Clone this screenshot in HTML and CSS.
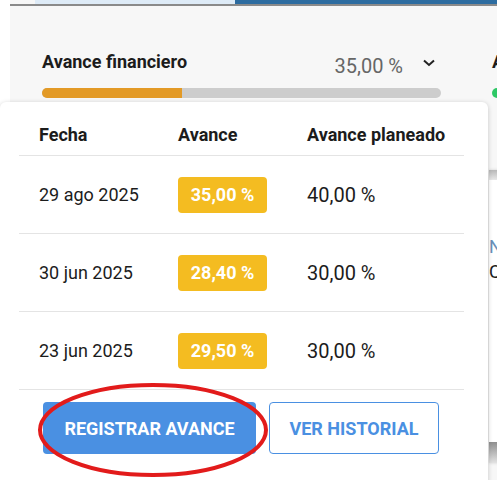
FILE: index.html
```html
<!DOCTYPE html>
<html lang="es">
<head>
    <meta charset="UTF-8">
    <meta name="viewport" content="width=device-width, initial-scale=1.0">
    <title>Avance</title>
    <link rel="stylesheet" href="styles.css">
</head>
<body>

<div class="app">
    <div class="topbar">
        <div class="tab tab-gris"></div>
        <div class="tab tab-claro"></div>
        <div class="tab tab-oscuro"></div>
    </div>

    <div class="panel">
        <div class="metric">
            <div class="metric-head">
                <span class="metric-title">Avance financiero</span>
                <span class="metric-value">35,00 %</span>
                <svg class="chevron" width="12" height="8" viewBox="0 0 12 8"><path d="M1 1.5 L6 6 L11 1.5" fill="none" stroke="#222" stroke-width="2"/></svg>
            </div>
            <div class="bar"><div class="bar-fill" style="width: 35%"></div></div>
        </div>

        <div class="metric metric-next">
            <div class="metric-head">
                <span class="metric-title">Avance físico</span>
            </div>
            <div class="bar bar-green"></div>
            <div class="side-card">
                <div class="side-top"></div>
                <div class="side-text side-blue">N</div>
                <div class="side-text">C</div>
                <div class="side-bottom"></div>
            </div>
        </div>
    </div>

    <div class="popup">
        <div class="tabla">
            <div class="fila cabecera">
                <div class="celda">Fecha</div>
                <div class="celda">Avance</div>
                <div class="celda">Avance planeado</div>
            </div>
            <div class="fila">
                <div class="celda">29 ago 2025</div>
                <div class="celda"><span class="badge">35,00 %</span></div>
                <div class="celda planeado">40,00 %</div>
            </div>
            <div class="fila">
                <div class="celda">30 jun 2025</div>
                <div class="celda"><span class="badge">28,40 %</span></div>
                <div class="celda planeado">30,00 %</div>
            </div>
            <div class="fila">
                <div class="celda">23 jun 2025</div>
                <div class="celda"><span class="badge">29,50 %</span></div>
                <div class="celda planeado">30,00 %</div>
            </div>
        </div>
        <div class="acciones">
            <button class="btn btn-primario">REGISTRAR AVANCE</button>
            <button class="btn btn-secundario">VER HISTORIAL</button>
        </div>
    </div>

    <svg class="marca" width="234" height="100" viewBox="0 0 234 100">
        <ellipse cx="116" cy="47" rx="113" ry="45" fill="none" stroke="#e21b1b" stroke-width="4"/>
    </svg>
</div>

</body>
</html>
```

FILE: styles.css
```css
body {
    margin: 0;
    padding: 0;
    font-family: Roboto, "Liberation Sans", Arial, sans-serif;
    background-color: #fff;
    color: #1c1c1c;
    overflow: hidden;
}
.app {
    position: relative;
    height: 480px;
    padding-left: 10px;
}
.topbar {
    display: flex;
    height: 4px;
    border-bottom: 2px solid #8a8a8a;
}
.tab-gris {
    width: 25px;
    background-color: #f7f7f7;
}
.tab-claro {
    width: 200px;
    background-color: #deebf7;
}
.tab-oscuro {
    flex: 1;
    background-color: #2d6ca0;
}
.panel {
    display: flex;
    gap: 51px;
    height: 474px;
    padding: 44px 0 0 32px;
    background-color: #f7f7f7;
    box-sizing: border-box;
}
.metric {
    width: 399px;
    flex-shrink: 0;
}
.metric-head {
    display: flex;
    align-items: flex-start;
    height: 24px;
}
.metric-title {
    flex: 1;
    font-size: 18px;
    line-height: 24px;
    font-weight: 700;
    color: #1c1c1c;
}
.metric-value {
    padding-top: 4px;
    margin-right: 20px;
    font-size: 20px;
    line-height: 24px;
    color: #666;
}
.chevron {
    margin: 9px 6px 0 0;
}
.bar {
    height: 10px;
    margin-top: 14px;
    border-radius: 5px;
    background-color: #cdcdcd;
    overflow: hidden;
}
.bar-fill {
    height: 100%;
    background-color: #e39a26;
}
.bar-green {
    background-color: #2ec866;
}
.side-card {
    margin: 72px 0 0 -3px;
    height: 293px;
    display: flex;
    flex-direction: column;
    background-color: #fff;
    box-shadow: 0 0 3px rgba(0, 0, 0, 0.15);
}
.side-top {
    height: 10px;
    background: linear-gradient(#b8b8b8, #e8e8e8);
}
.side-text {
    font-size: 18px;
    line-height: 25px;
}
.side-blue {
    margin-top: 54px;
    color: #6b8fb8;
}
.side-bottom {
    margin-top: auto;
    height: 21px;
    background: linear-gradient(#8f8f8f, #e2e2e2);
}
.popup {
    position: absolute;
    left: 0;
    top: 102px;
    width: 488px;
    height: 400px;
    padding: 0 24px 0 19px;
    box-sizing: border-box;
    background-color: #fff;
    border-radius: 6px;
    box-shadow: 0 1px 5px rgba(0, 0, 0, 0.2);
}
.fila {
    display: grid;
    grid-template-columns: 139px 129px 1fr;
    align-items: center;
    height: 77px;
    border-bottom: 1px solid #e4e4e4;
    font-size: 18px;
    color: #1c1c1c;
}
.fila.cabecera {
    height: 54px;
    align-items: end;
    padding-bottom: 10px;
    box-sizing: border-box;
    font-weight: 700;
}
.celda {
    padding-left: 20px;
}
.planeado {
    font-size: 20px;
}
.badge {
    display: inline-block;
    width: 89px;
    height: 36px;
    line-height: 36px;
    text-align: center;
    border-radius: 4px;
    background-color: #f4bc21;
    color: #fff;
    font-size: 18px;
    font-weight: 700;
}
.acciones {
    display: flex;
    gap: 13px;
    padding: 12px 0 0 24px;
}
.btn {
    height: 52px;
    font-family: inherit;
    font-size: 18px;
    font-weight: 700;
    border-radius: 4px;
    cursor: pointer;
}
.btn-primario {
    width: 213px;
    border: none;
    background-color: #4a90e2;
    color: #fff;
}
.btn-secundario {
    width: 170px;
    border: 1.5px solid #4a90e2;
    background-color: #fff;
    color: #4a90e2;
}
.marca {
    position: absolute;
    left: 37px;
    top: 383px;
}
```
